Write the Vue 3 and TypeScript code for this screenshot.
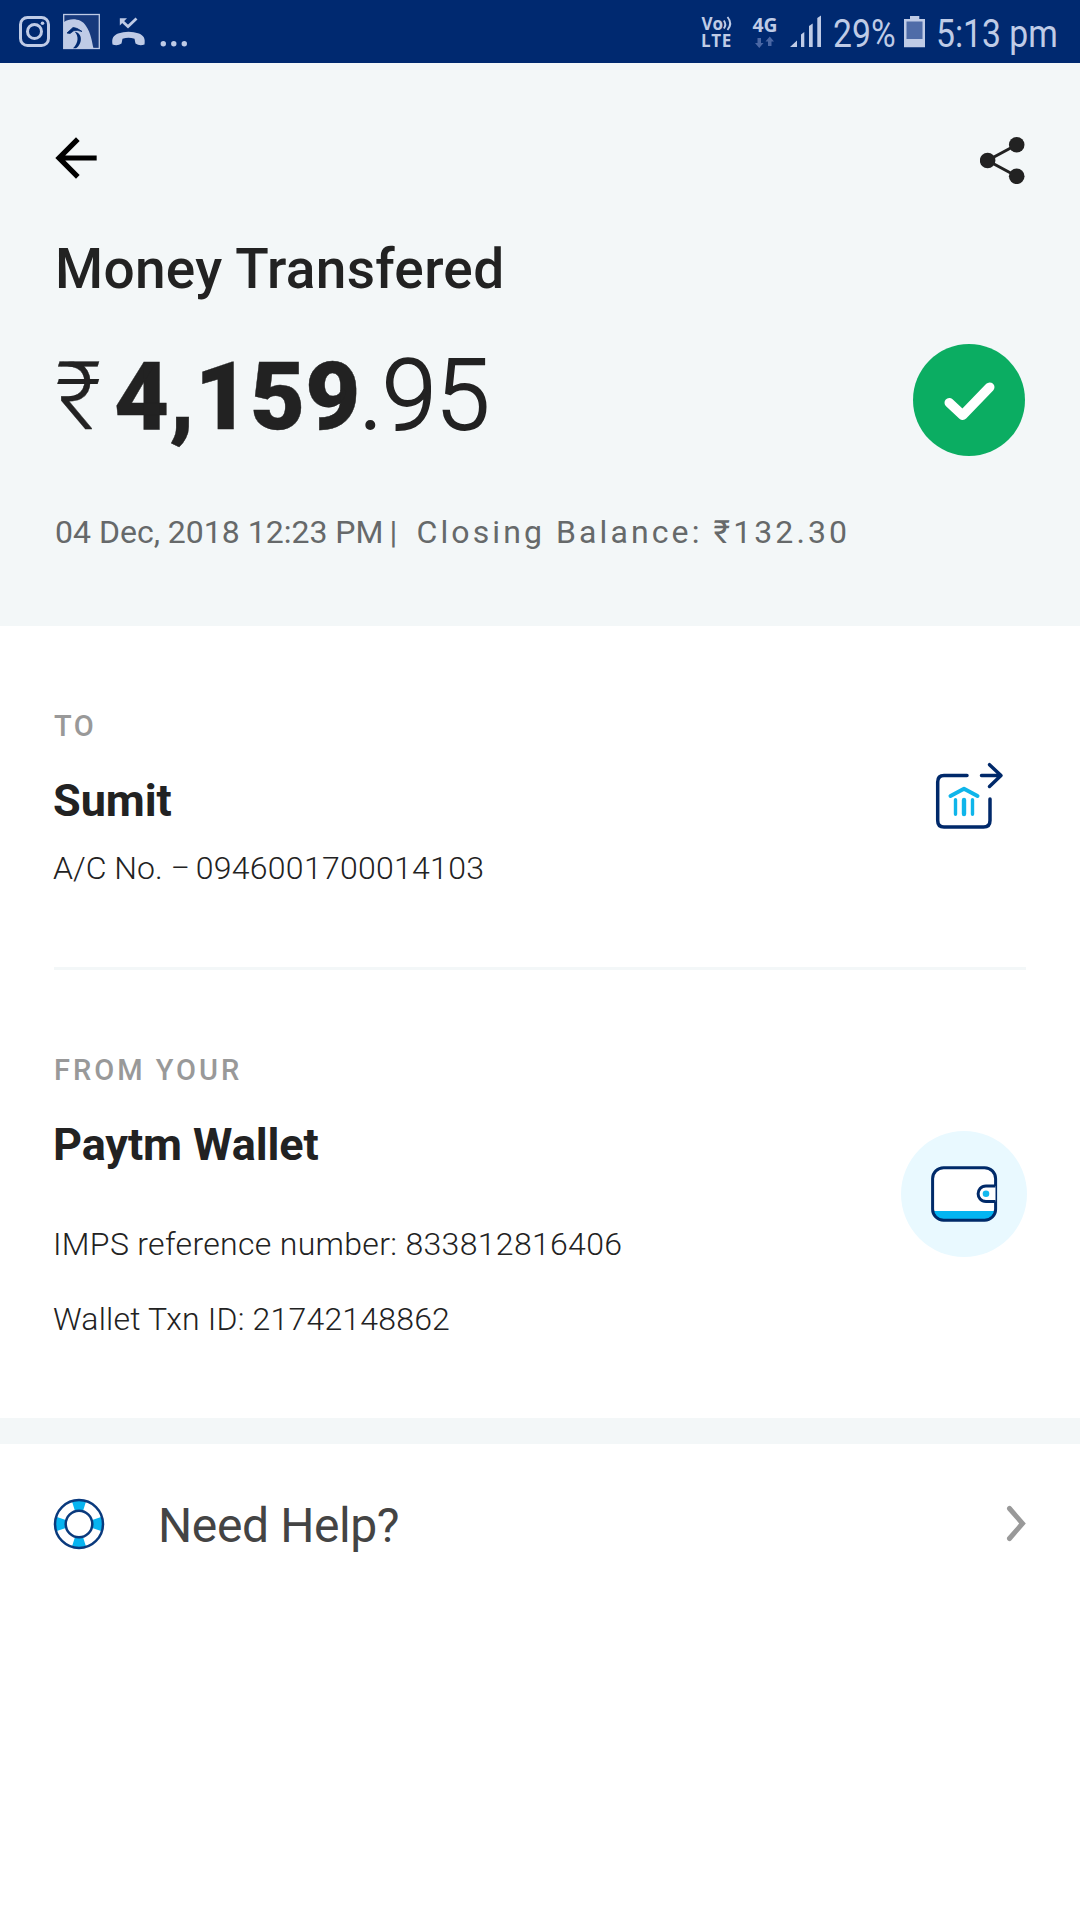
<script setup lang="ts">
interface Txn {
  label: string
  value: string
}

const references: Txn[] = [
  { label: 'IMPS reference number', value: '833812816406' },
  { label: 'Wallet Txn ID', value: '21742148862' },
]
</script>

<template>
  <div class="screen">
    <div class="status">
      <div class="status-side">
        <svg width="56" height="63" viewBox="0 0 56 63" fill="none" stroke="#bfcbe6">
          <rect x="20.5" y="17.5" width="28" height="28" rx="7" stroke-width="3" />
          <circle cx="34.5" cy="31.5" r="7" stroke-width="3" />
          <circle cx="42.5" cy="23.3" r="1.8" fill="#bfcbe6" stroke="none" />
        </svg>
        <svg width="50" height="63" viewBox="56 0 50 63">
          <rect x="63.7" y="14.5" width="35.6" height="34" fill="#17397c" stroke="#bfcbe6" stroke-width="1.3" />
          <path d="M64 22C70 18 81 18 86 26C91 33 92 42 93.500 48.500H64Z" fill="#bfcbe6" />
          <path d="M67 33L73 27.500Q77 27.500 82 31.500Q77 29.800 74 30.500L70 33.500Z" fill="#002970" stroke="#002970" stroke-width="0.800" />
          <path d="M74.500 31.500C83 33 82.500 44 76 48.300H73C78.500 43 79 36 74.500 31.500Z" fill="#002970" />
        </svg>
        <svg width="46" height="63" viewBox="106 0 46 63">
          <path d="M112.500 44.500C111.500 38 113.500 35.500 118 33.500Q128.500 30 139 33.500C143.500 35.500 145.500 38 144.500 44.500Q139.500 46.500 135.500 43.500L134.500 38.700Q128.500 36.700 122.500 38.700L121.500 43.500Q117.500 46.500 112.500 44.500Z" fill="#bfcbe6" />
          <path d="M122 21L128 26.500L136.500 18.500" fill="none" stroke="#bfcbe6" stroke-width="2.800" />
          <path d="M119.800 18.300H127L119.800 25.500Z" fill="#bfcbe6" />
        </svg>
        <svg width="40" height="63" viewBox="152 0 40 63" fill="#bfcbe6">
          <circle cx="163.300" cy="43.700" r="2.700" />
          <circle cx="173.800" cy="43.700" r="2.700" />
          <circle cx="184.300" cy="43.700" r="2.700" />
        </svg>
      </div>
      <div class="status-side">
        <svg width="50" height="63" viewBox="692 0 50 63" fill="#bfcbe6">
          <text class="tag" font-size="17"><tspan x="701.500" y="29.500">Vo</tspan><tspan x="701" y="47" letter-spacing="0.7">LTE</tspan></text>
          <path d="M723.800 20.500Q726.800 24.500 723.800 28.500M727.500 17Q733 23.500 727.500 30" fill="none" stroke="#bfcbe6" stroke-width="1.900" />
        </svg>
        <svg width="43" height="63" viewBox="742 0 43 63" fill="#bfcbe6">
          <text class="tag" x="752.500" y="31.500" font-size="19" textLength="25" lengthAdjust="spacingAndGlyphs">4G</text>
          <path d="M757.500 38H761V43H763.500L759.250 48L755 43H757.500ZM768 46H771.500V41.500H774L769.750 36.500L765.500 41.500H768Z" fill="#4a67a4" />
        </svg>
        <svg width="48" height="63" viewBox="785 0 48 63" fill="#bfcbe6">
          <path d="M790 47L797 40.500V47ZM801 47V34.500L804.300 32V47ZM809 47V26L812.700 23.500V47ZM817.300 47V18L821 15.500V47Z" />
        </svg>
        <div class="battery-level"><span class="narrow">29%</span></div>
        <svg width="39" height="63" viewBox="898 0 39 63">
          <path d="M910 16H919.300V19H925V47.300H904V19H910Z" fill="#bfcbe6" />
          <rect x="906.500" y="21.500" width="16" height="17.500" fill="#4f6ca8" />
        </svg>
        <div class="clock"><span class="narrow">5:13 pm</span></div>
      </div>
    </div>

    <header class="hero">
      <div class="toolbar">
        <svg class="back" width="62" height="62" viewBox="0 0 24 24"><path d="M20 11H7.830l5.590-5.590L12 4l-8 8 8 8 1.410-1.410L7.830 13H20v-2z" /></svg>
        <svg width="46" height="48" viewBox="980 136 46 48" fill="#222" stroke="#222">
          <path d="M1016.700 144.700L987.500 160.500L1016.700 176.300" fill="none" stroke-width="3" />
          <g stroke="none">
            <circle cx="1016.700" cy="144.700" r="7.800" />
            <circle cx="987.600" cy="160.500" r="7.800" />
            <circle cx="1016.700" cy="176.300" r="7.800" />
          </g>
        </svg>
      </div>
      <h1 class="title">Money Transfered</h1>
      <div class="amount-row">
        <div class="amount"><span class="rupee">₹</span><span class="whole">4,159</span><span class="paise">.95</span></div>
        <svg width="112" height="112" viewBox="0 0 112 112">
          <circle cx="56" cy="56" r="56" fill="#0bad62" />
          <path d="M36.300 58.800L49.700 71.200L76.700 43.200" fill="none" stroke="#fff" stroke-width="9.600" stroke-linecap="round" stroke-linejoin="round" />
        </svg>
      </div>
      <p class="meta"><span class="date">04 Dec, 2018 12:23 PM</span><span class="bar">|</span><span class="closing">Closing Balance: ₹132.30</span></p>
    </header>

    <main class="details">
      <section class="party to">
        <div>
          <p class="caption">TO</p>
          <h2 class="name">Sumit</h2>
          <p class="line account">A/C No. <span class="dash">–</span> <span class="digits">0946001700014103</span></p>
        </div>
        <svg class="bank" width="76" height="72" viewBox="933 760 76 72" fill="none" stroke-linecap="round" stroke-linejoin="round">
          <g stroke="#00296a" stroke-width="3.500">
            <path d="M967 775.500H944Q937.700 775.500 937.700 782V820.500Q937.700 827 944 827H983.500Q990 827 990 820.500V799" />
            <path d="M981.500 775.500H1000.500M989.500 764.700L1001 775.500L989.500 786.500" />
          </g>
          <g stroke="#0fb5ea">
            <path d="M950.500 796L964 788.800L977.500 796" stroke-width="4" />
            <path d="M955.500 799.700V814.300M972.500 799.700V814.300" stroke-width="3.400" />
            <path d="M964 800V814" stroke-width="4.400" />
          </g>
        </svg>
      </section>
      <section class="party from">
        <div>
          <p class="caption wide">FROM YOUR</p>
          <h2 class="name">Paytm Wallet</h2>
          <p v-for="item in references" :key="item.label" class="line ref">{{ item.label }}: {{ item.value }}</p>
        </div>
        <svg class="wallet" width="126" height="126" viewBox="901 1131 126 126">
          <circle cx="964" cy="1194" r="63" fill="#e9f9ff" />
          <rect x="932.600" y="1167.700" width="63" height="52.500" rx="11" fill="#fff" />
          <path d="M933 1211H996Q995 1220 985 1220H944Q934 1220 933 1211Z" fill="#04b5f2" />
          <rect x="932.600" y="1167.700" width="63" height="52.500" rx="11" fill="none" stroke="#002a69" stroke-width="3" />
          <path d="M995.500 1186H986C975.500 1186 975.500 1201.500 986 1201.500H995.500" fill="#fff" stroke="#002a69" stroke-width="3" />
          <circle cx="986" cy="1193.800" r="3.300" fill="#12b9ee" />
        </svg>
      </section>
    </main>

    <section class="help">
      <svg width="52" height="52" viewBox="-26 -26 52 52">
        <circle r="18.500" fill="none" stroke="#fff" stroke-width="11" />
        <circle r="18.500" fill="none" stroke="#08b4f0" stroke-width="11" pathLength="360" stroke-dasharray="35 55" stroke-dashoffset="17.500" />
        <circle r="24" fill="none" stroke="#0a3a7d" stroke-width="2.500" />
        <circle r="13.300" fill="none" stroke="#0a3a7d" stroke-width="2.500" />
      </svg>
      <span class="help-text">Need Help?</span>
      <svg class="chevron" width="22" height="40" viewBox="0 0 22 40"><path d="M4.500 4.500L17.500 19.500L4.500 34.500" fill="none" stroke="#999" stroke-width="5" stroke-linecap="round" /></svg>
    </section>
  </div>
</template>

<style>
body {
  margin: 0;
  background: #fff;
}
</style>

<style scoped>
.screen {
  width: 1080px;
  height: 1920px;
  overflow: hidden;
  background: #fff;
  color: #222;
  font-family: Roboto, "Noto Sans", sans-serif;
}
h1,
h2,
p {
  margin: 0;
}
svg {
  display: block;
  flex: none;
}
.status {
  display: flex;
  justify-content: space-between;
  height: 63px;
  background: #002970;
  color: #bfcbe6;
}
.status-side {
  display: flex;
}
.tag {
  font-family: "Open Sans", sans-serif;
  font-weight: 700;
}
.battery-level,
.clock {
  font-size: 38px;
  line-height: 68px;
  height: 63px;
  white-space: nowrap;
}
.battery-level {
  width: 65px;
}
.clock {
  width: 144px;
  margin-left: -1px;
}
.narrow {
  display: inline-block;
  transform: scaleX(0.887);
  transform-origin: left;
}
.hero {
  box-sizing: border-box;
  height: 563px;
  padding: 64px 54px 0 55px;
  background: #f3f7f8;
}
.toolbar {
  display: flex;
  justify-content: space-between;
  align-items: flex-start;
  height: 109px;
}
.toolbar svg:last-child {
  margin-top: 9px;
}
.back {
  margin-left: -10px;
}
.title {
  height: 66px;
  font-size: 55px;
  font-weight: 500;
  line-height: 66px;
  letter-spacing: 0.3px;
  white-space: nowrap;
}
.amount-row {
  display: flex;
  justify-content: space-between;
  align-items: flex-start;
  height: 132px;
  margin-top: 42px;
}
.amount-row svg {
  margin-right: 1px;
}
.amount {
  display: flex;
  align-items: baseline;
  margin-top: -4px;
  line-height: 112px;
  white-space: nowrap;
}
.rupee {
  width: 59px;
  font-size: 95px;
  font-weight: 300;
  -webkit-text-stroke: 0.3px #222;
}
.whole {
  font-size: 95px;
  font-weight: 880;
  letter-spacing: 0.1px;
  -webkit-text-stroke: 0.4px #222;
}
.paise {
  margin-left: -1px;
  font-size: 98px;
  font-weight: 300;
  letter-spacing: -0.8px;
  -webkit-text-stroke: 1.8px #222;
}
.meta {
  display: flex;
  margin-top: 36px;
  font-size: 32px;
  line-height: 40px;
  color: #66696a;
  white-space: nowrap;
}
.bar {
  width: 27px;
  margin-left: 6px;
}
.closing {
  letter-spacing: 3.1px;
}
.details {
  height: 792px;
  padding: 0 54px 0 53px;
  border-bottom: 26px solid #f3f7f8;
}
.party {
  display: flex;
  justify-content: space-between;
  align-items: flex-start;
}
.to {
  height: 341px;
  margin-left: 1px;
  border-bottom: 3px solid #f3f7f8;
}
.to > div {
  margin-left: -1px;
}
.caption {
  padding: 80px 0 0 1px;
  font-size: 29px;
  font-weight: 500;
  line-height: 40px;
  letter-spacing: 2.4px;
  color: #999;
}
.wide {
  letter-spacing: 3px;
}
.name {
  margin-top: 28px;
  font-size: 45px;
  font-weight: 700;
  line-height: 54px;
  letter-spacing: -0.08px;
  white-space: nowrap;
}
.line {
  font-size: 32px;
  font-weight: 300;
  line-height: 40px;
  white-space: nowrap;
}
.account {
  margin-top: 20px;
}
.dash {
  display: inline-block;
  width: 18px;
  margin-left: 0.500px;
  transform: scaleX(0.9);
  transform-origin: left;
}
.digits {
  margin-left: -1px;
  letter-spacing: 0.28px;
}
.ref {
  margin-top: 35px;
  letter-spacing: 0.32px;
}
.ref:last-child {
  letter-spacing: 0.2px;
}
.name + .ref {
  margin-top: 52px;
}
.bank {
  margin: 134px 17px 0 0;
}
.wallet {
  margin: 161px -1px 0 0;
}
.help {
  display: flex;
  align-items: center;
  height: 160px;
  padding: 0 53px 0 53px;
}
.help-text {
  margin-left: 53px;
  padding-top: 4px;
  font-size: 48px;
  line-height: 60px;
  letter-spacing: -0.4px;
  color: #444;
}
.chevron {
  margin-left: auto;
}
</style>
